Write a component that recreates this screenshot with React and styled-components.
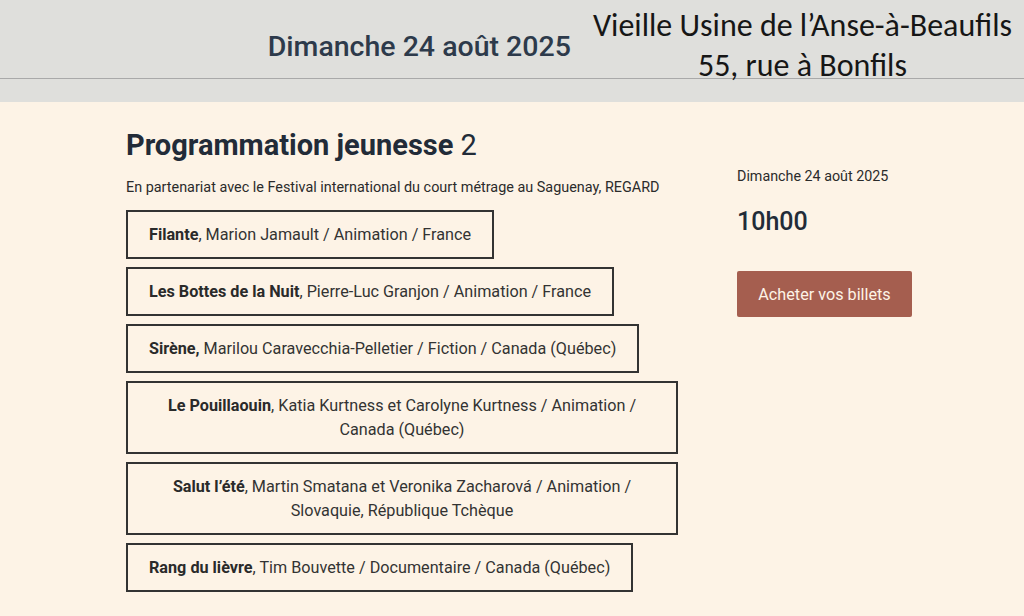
import React from 'react'
import styled, { createGlobalStyle } from 'styled-components'

const GlobalStyle = createGlobalStyle`
  body {
    margin: 0;
    background: #fdf3e6;
    font-family: Roboto, "Liberation Sans", sans-serif;
  }
`

const films = [
  { title: 'Filante', rest: ', Marion Jamault / Animation / France' },
  { title: 'Les Bottes de la Nuit', rest: ', Pierre-Luc Granjon / Animation / France' },
  { title: 'Sirène,', rest: ' Marilou Caravecchia-Pelletier / Fiction / Canada (Québec)' },
  { title: 'Le Pouillaouin', rest: ', Katia Kurtness et Carolyne Kurtness / Animation / Canada (Québec)' },
  { title: 'Salut l’été', rest: ', Martin Smatana et Veronika Zacharová / Animation / Slovaquie, République Tchèque' },
  { title: 'Rang du lièvre', rest: ', Tim Bouvette / Documentaire / Canada (Québec)' },
]

const App = () => {
  return (<>
    <GlobalStyle />
    <Header>
      <HeaderRow>
        <HeaderDate>Dimanche 24 août 2025</HeaderDate>
        <Venue>
          <span>Vieille Usine de l’Anse-à-Beaufils</span>
          <span>55, rue à Bonfils</span>
        </Venue>
      </HeaderRow>
    </Header>
    <Main>
      <LeftCol>
        <Title>Programmation jeunesse <Num>2</Num></Title>
        <Partner>En partenariat avec le Festival international du court métrage au Saguenay, REGARD</Partner>
        <FilmList>
          {films.map((f) => (
            <Film key={f.title}>
              <b>{f.title}</b>{f.rest}
            </Film>
          ))}
        </FilmList>
      </LeftCol>
      <Side>
        <SideDate>Dimanche 24 août 2025</SideDate>
        <Time>10h00</Time>
        <Buy>Acheter vos billets</Buy>
      </Side>
    </Main>
  </>)
}
export default App

const Header = styled.header`
  background: #dfdfdc;
  height: 102px;
`
const HeaderRow = styled.div`
  height: 78px;
  border-bottom: 1px solid #a9a9a9;
  display: flex;
  justify-content: flex-end;
  align-items: flex-start;
  gap: 22px;
  padding-right: 12px;
`
const HeaderDate = styled.div`
  margin-top: 29px;
  font-size: 28.5px;
  line-height: 36px;
  font-weight: 500;
  color: #2d3a4b;
`
const Venue = styled.div`
  display: flex;
  flex-direction: column;
  align-items: center;
  margin-top: 6px;
  font-family: Carlito, "Liberation Sans Narrow", "DejaVu Sans Condensed", sans-serif;
  font-size: 32px;
  line-height: 40px;
  color: #161616;
`
const Main = styled.main`
  display: flex;
  padding: 0 0 0 126px;
`
const LeftCol = styled.div`
  width: 611px;
`
const Title = styled.h1`
  margin: 25px 0 0;
  font-size: 29px;
  line-height: 36px;
  font-weight: 700;
  color: #222b38;
`
const Num = styled.span`
  font-weight: 400;
`
const Partner = styled.p`
  margin: 15px 0 12px;
  font-size: 14.4px;
  line-height: 20px;
  color: #2b2b2b;
`
const FilmList = styled.div`
  display: flex;
  flex-direction: column;
  align-items: flex-start;
  gap: 8px;
`
const Film = styled.div`
  max-width: 552px;
  box-sizing: border-box;
  border: 2px solid #333;
  padding: 10.5px 21px;
  font-size: 16.2px;
  line-height: 24px;
  color: #333;
  text-align: center;
  b { font-weight: 700; color: #2a2a2a; }
`
const Side = styled.aside`
  display: flex;
  flex-direction: column;
  align-items: flex-start;
  padding-top: 65px;
`
const SideDate = styled.div`
  font-size: 14.3px;
  line-height: 18px;
  color: #2b2b2b;
`
const Time = styled.div`
  margin-top: 22px;
  font-size: 25px;
  line-height: 30px;
  font-weight: 500;
  color: #222b38;
`
const Buy = styled.button`
  margin-top: 34px;
  width: 175px;
  height: 46px;
  border: none;
  border-radius: 2px;
  background: #a55e4f;
  color: #fdf3e6;
  font-family: Roboto, sans-serif;
  font-size: 16.2px;
`
